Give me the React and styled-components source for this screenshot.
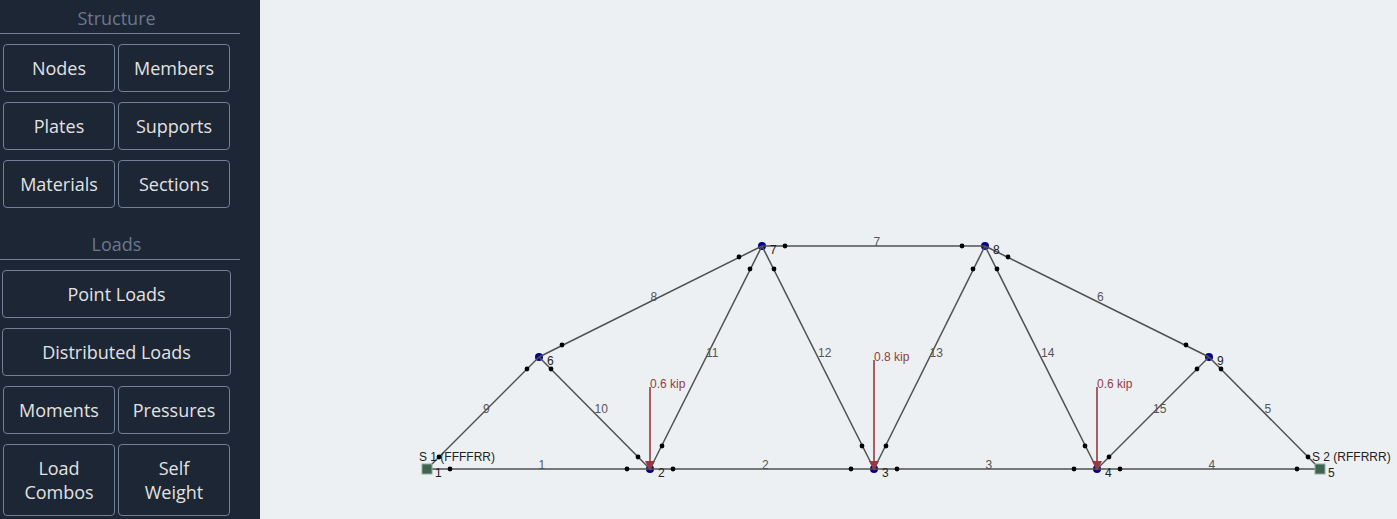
import React from 'react';
import styled, { createGlobalStyle } from 'styled-components';

const GlobalStyle = createGlobalStyle`
  body {
    margin: 0;
    background: #ecf0f3;
    font-family: 'Open Sans', 'Noto Sans', sans-serif;
  }
`;

const Layout = styled.div`
  display: flex;
  min-height: 100vh;
`;

const Sidebar = styled.aside`
  flex: 0 0 260px;
  box-sizing: border-box;
  padding: 0 20px 3px 0;
  background: #1d2634;
`;

const Section = styled.section`
  margin-bottom: 18px;

  &:last-child {
    margin-bottom: 0;
  }
`;

const SectionTitle = styled.h2`
  margin: 0 0 10px;
  padding: 6px 7px 3px 0;
  border-bottom: 1px solid #718096;
  color: #6b7890;
  font-size: 18px;
  font-weight: 400;
  line-height: 24px;
  text-align: center;
`;

const ButtonGrid = styled.div`
  display: grid;
  grid-template-columns: 1fr 1fr;
  gap: 10px 3px;
  padding: 0 10px 0 3px;
`;

const MenuButton = styled.button`
  grid-column: ${({ $wide }) => ($wide ? '1 / -1' : 'auto')};
  margin: ${({ $wide }) => ($wide ? '0 -1px' : '0')};
  padding: 11px;
  background: transparent;
  border: 1px solid #718096;
  border-radius: 4px;
  color: #e2e2e2;
  font-family: inherit;
  font-size: 18px;
  line-height: 24px;
  cursor: pointer;

  &:hover {
    background: #2d3748;
  }
`;

const Canvas = styled.main`
  flex: 1;
  min-width: 0;
`;

const Drawing = styled.svg`
  display: block;
  width: 100%;
  height: auto;
  font-family: 'Liberation Sans', Arial, sans-serif;
  font-size: 12px;
`;

const MemberLine = styled.line`
  stroke: #505050;
  stroke-width: 1.5;
`;

const MemberLabel = styled.text`
  fill: #555;
`;

const NodeLabel = styled.text`
  fill: #222;
`;

const LoadLabel = styled.text`
  fill: #943c40;
`;

const sections = [
  {
    title: 'Structure',
    buttons: [
      { label: 'Nodes' },
      { label: 'Members' },
      { label: 'Plates' },
      { label: 'Supports' },
      { label: 'Materials' },
      { label: 'Sections' },
    ],
  },
  {
    title: 'Loads',
    buttons: [
      { label: 'Point Loads', wide: true },
      { label: 'Distributed Loads', wide: true },
      { label: 'Moments' },
      { label: 'Pressures' },
      { label: 'Load Combos' },
      { label: 'Self Weight' },
    ],
  },
];

const nodes = {
  1: [167, 469],
  2: [390, 469],
  3: [614, 469],
  4: [837, 469],
  5: [1060, 469],
  6: [279, 357],
  7: [502, 246],
  8: [725, 246],
  9: [949, 357],
};

// id, start node, end node
const members = [
  [1, 1, 2],
  [2, 2, 3],
  [3, 3, 4],
  [4, 4, 5],
  [5, 5, 9],
  [6, 9, 8],
  [7, 8, 7],
  [8, 7, 6],
  [9, 6, 1],
  [10, 6, 2],
  [11, 2, 7],
  [12, 7, 3],
  [13, 3, 8],
  [14, 8, 4],
  [15, 4, 9],
];

const supports = [
  { id: 1, node: 1, code: 'FFFFRR' },
  { id: 2, node: 5, code: 'RFFRRR' },
];

const pointLoads = [
  { node: 2, value: 0.6, length: 82 },
  { node: 3, value: 0.8, length: 109 },
  { node: 4, value: 0.6, length: 82 },
];

// releases sit a little way in from each end of the member
const RELEASE = 0.104;

const Member = ({ id, from, to }) => {
  const [x1, y1] = nodes[from];
  const [x2, y2] = nodes[to];
  const at = (t) => [x1 + (x2 - x1) * t, y1 + (y2 - y1) * t];
  const [mx, my] = at(0.5);

  return (
    <g>
      <MemberLine x1={x1} y1={y1} x2={x2} y2={y2} />
      {[RELEASE, 1 - RELEASE].map((t) => {
        const [cx, cy] = at(t);
        return <circle key={t} cx={Math.round(cx)} cy={Math.floor(cy + 0.4)} r="2.4" fill="#000" />;
      })}
      <MemberLabel x={mx} y={Math.floor(my)}>{id}</MemberLabel>
    </g>
  );
};

const Support = ({ id, node, code }) => {
  const [x, y] = nodes[node];
  return (
    <g>
      <rect x={x - 5} y={y - 5} width="10" height="10" fill="#3f6350" stroke="#8fae9b" strokeWidth="1" />
      <NodeLabel x={x - 8} y={y - 8}>{`S ${id} (${code})`}</NodeLabel>
    </g>
  );
};

const PointLoad = ({ node, value, length }) => {
  const [x, y] = nodes[node];
  return (
    <g>
      <line x1={x} y1={y - length} x2={x} y2={y - 7} stroke="#943c40" strokeWidth="1.6" />
      <polygon points={`${x - 5},${y - 8} ${x + 5},${y - 8} ${x},${y + 2}`} fill="#943c40" />
      <LoadLabel x={x} y={y - length + 1}>{`${value} kip`}</LoadLabel>
    </g>
  );
};

const Truss = () => (
  <Drawing viewBox="0 0 1137 519" role="img" aria-label="Truss model">
    {Object.entries(nodes).map(([id, [x, y]]) => (
      <circle key={id} cx={x} cy={y} r="4" fill="#00008b" />
    ))}
    {members.map(([id, from, to]) => (
      <Member key={id} id={id} from={from} to={to} />
    ))}
    {Object.entries(nodes).map(([id, [x, y]]) => (
      <NodeLabel key={id} x={x + 8} y={y + 8}>{id}</NodeLabel>
    ))}
    {supports.map((support) => (
      <Support key={support.id} {...support} />
    ))}
    {pointLoads.map((load) => (
      <PointLoad key={load.node} {...load} />
    ))}
  </Drawing>
);

const App = () => (
  <>
    <GlobalStyle />
    <Layout>
      <Sidebar>
        {sections.map(({ title, buttons }) => (
          <Section key={title}>
            <SectionTitle>{title}</SectionTitle>
            <ButtonGrid>
              {buttons.map(({ label, wide }) => (
                <MenuButton key={label} type="button" $wide={wide}>
                  {label}
                </MenuButton>
              ))}
            </ButtonGrid>
          </Section>
        ))}
      </Sidebar>
      <Canvas>
        <Truss />
      </Canvas>
    </Layout>
  </>
);

export default App;
